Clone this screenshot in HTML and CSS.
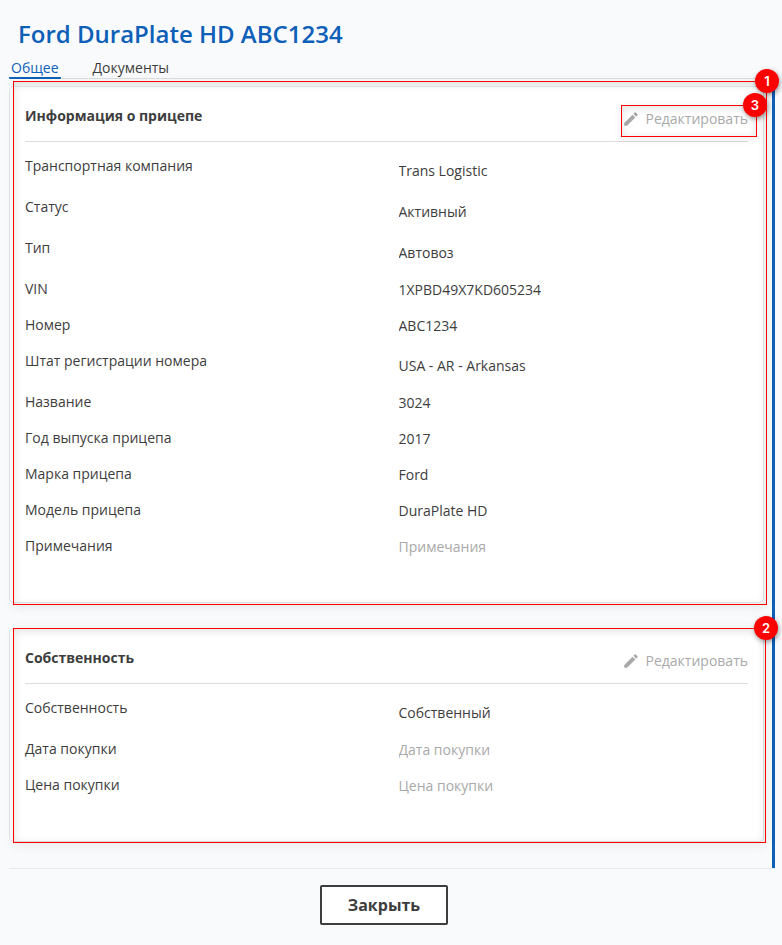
FILE: index.html
```
<!DOCTYPE html>
<html lang="ru">
  <head>
    <meta charset="UTF-8" />
    <meta name="viewport" content="width=device-width, initial-scale=1.0" />
    <title>Ford DuraPlate HD ABC1234</title>
    <link rel="stylesheet" href="styles.css">
  </head>
  <body>
    <h1>Ford DuraPlate HD ABC1234</h1>
    <nav class="tabs">
      <a href="#general" class="tab active">Общее</a>
      <a href="#documents" class="tab">Документы</a>
    </nav>
    <main class="content">
      <section class="card" id="general">
        <div class="card-header">
          <h2>Информация о прицепе</h2>
          <button type="button" class="edit-btn">
            <svg viewBox="0 0 24 24" width="18" height="18"><path d="M3 17.25V21h3.75L17.81 9.94l-3.75-3.75L3 17.25zM20.71 7.04a1 1 0 0 0 0-1.41l-2.34-2.34a1 1 0 0 0-1.41 0l-1.83 1.83 3.75 3.75 1.83-1.83z" /></svg>
            Редактировать
            <span class="callout callout-edit"><span class="badge">3</span></span>
          </button>
        </div>
        <div class="row tall">
          <label for="company">Транспортная компания</label>
          <input id="company" value="Trans Logistic" readonly />
        </div>
        <div class="row tall">
          <label for="status">Статус</label>
          <input id="status" value="Активный" readonly />
        </div>
        <div class="row tall">
          <label for="type">Тип</label>
          <input id="type" value="Автовоз" readonly />
        </div>
        <div class="row">
          <label for="vin">VIN</label>
          <input id="vin" value="1XPBD49X7KD605234" readonly />
        </div>
        <div class="row">
          <label for="number">Номер</label>
          <input id="number" value="ABC1234" readonly />
        </div>
        <div class="row tall">
          <label for="state">Штат регистрации номера</label>
          <input id="state" value="USA - AR - Arkansas" readonly />
        </div>
        <div class="row">
          <label for="name">Название</label>
          <input id="name" value="3024" readonly />
        </div>
        <div class="row">
          <label for="year">Год выпуска прицепа</label>
          <input id="year" value="2017" readonly />
        </div>
        <div class="row">
          <label for="make">Марка прицепа</label>
          <input id="make" value="Ford" readonly />
        </div>
        <div class="row">
          <label for="model">Модель прицепа</label>
          <input id="model" value="DuraPlate HD" readonly />
        </div>
        <div class="row">
          <label for="notes">Примечания</label>
          <input id="notes" placeholder="Примечания" readonly />
        </div>
        <div class="callout callout-info"><span class="badge">1</span></div>
      </section>
      <section class="card">
        <div class="card-header">
          <h2>Собственность</h2>
          <button type="button" class="edit-btn">
            <svg viewBox="0 0 24 24" width="18" height="18"><path d="M3 17.25V21h3.75L17.81 9.94l-3.75-3.75L3 17.25zM20.71 7.04a1 1 0 0 0 0-1.41l-2.34-2.34a1 1 0 0 0-1.41 0l-1.83 1.83 3.75 3.75 1.83-1.83z" /></svg>
            Редактировать
          </button>
        </div>
        <div class="row tall">
          <label for="ownership">Собственность</label>
          <input id="ownership" value="Собственный" readonly />
        </div>
        <div class="row">
          <label for="buyDate">Дата покупки</label>
          <input id="buyDate" placeholder="Дата покупки" readonly />
        </div>
        <div class="row">
          <label for="buyPrice">Цена покупки</label>
          <input id="buyPrice" placeholder="Цена покупки" readonly />
        </div>
        <div class="callout callout-owner"><span class="badge">2</span></div>
      </section>
    </main>
    <footer>
      <button type="button" class="close-btn">Закрыть</button>
    </footer>
  </body>
</html>
```
FILE: styles.css
```
* {
  box-sizing: border-box;
}
body {
  margin: 0;
  padding: 18px 7px 20px 9px;
  background-color: #f9fafc;
  color: #3d3d3d;
  font-family: "Open Sans", sans-serif;
  font-size: 14px;
  line-height: 20px;
}
h1 {
  margin: 0;
  padding-left: 9px;
  color: #0d5fb8;
  font-size: 24px;
  font-weight: 600;
  line-height: 32px;
}
.tabs {
  display: flex;
  gap: 30px;
  margin-top: 8px;
  border-bottom: 1px solid #dcdfe2;
}
.tab {
  height: 21px;
  margin-bottom: -1px;
  padding: 0 2px;
  border-bottom: 2px solid transparent;
  color: #3d3d3d;
  text-decoration: none;
}
.tab.active {
  border-color: #0d5fb8;
  border-radius: 1px;
  color: #0d5fb8;
}
.content {
  display: flex;
  flex-direction: column;
  gap: 25px;
  padding: 7px 8px 26px 0;
  border-right: 3px solid #0d5fb8;
}
.card {
  position: relative;
  padding: 15px 15px 30px;
  border: 1px solid #e3e6e9;
  border-radius: 5px;
  background-color: #fff;
}
.card-header {
  display: flex;
  align-items: flex-start;
  justify-content: space-between;
  margin-bottom: 14px;
  padding-bottom: 5px;
  border-bottom: 1px solid #dcdcdc;
}
h2 {
  margin: 0;
  font-size: 14px;
  font-weight: 700;
  line-height: 28px;
}
.edit-btn {
  position: relative;
  display: flex;
  align-items: center;
  gap: 6px;
  height: 34px;
  padding: 0;
  border: none;
  background: none;
  color: #a9a9a9;
  font: inherit;
  cursor: pointer;
}
.edit-btn svg {
  fill: #a9a9a9;
}
.row {
  display: grid;
  grid-template-columns: 1fr 1fr;
  column-gap: 24px;
  align-items: start;
  height: 36px;
}
.row input {
  width: 100%;
  height: 20px;
  margin: 1px 0 0;
  padding: 0;
  border: none;
  outline: none;
  background: none;
  color: inherit;
  font: inherit;
}
.row input::placeholder {
  color: #a9a9a9;
}
.row.tall {
  height: 41px;
}
.row.tall input {
  margin-top: 5px;
}

/* numbered callouts over the form */
.callout {
  position: absolute;
  border: 1px solid #f00;
  box-shadow: 0 2px 10px rgba(0, 0, 0, 0.08), inset 0 2px 10px rgba(0, 0, 0, 0.12);
  pointer-events: none;
}
.callout-info {
  inset: -6px -4px -3px 3px;
}
.callout-owner {
  inset: -1px -3px -2px 3px;
}
.callout-edit {
  inset: 3px -9px -1px -1px;
}
.badge {
  position: absolute;
  top: -13px;
  right: -13px;
  width: 24px;
  height: 24px;
  border-radius: 50%;
  background-color: #f00;
  box-shadow: 1px 2px 5px rgba(0, 0, 0, 0.4);
  color: #fff;
  font-family: Inter, sans-serif;
  font-size: 13px;
  font-weight: 600;
  line-height: 24px;
  text-align: center;
}
.callout-edit .badge {
  right: -11px;
}
footer {
  padding: 16px 16px 0 0;
  border-top: 1px solid #e8eaec;
  text-align: center;
}
.close-btn {
  width: 128px;
  height: 40px;
  border: 2px solid #3d3d3d;
  border-radius: 2px;
  background-color: #fff;
  color: #3d3d3d;
  font: 700 16px "Open Sans", sans-serif;
  cursor: pointer;
}
```
